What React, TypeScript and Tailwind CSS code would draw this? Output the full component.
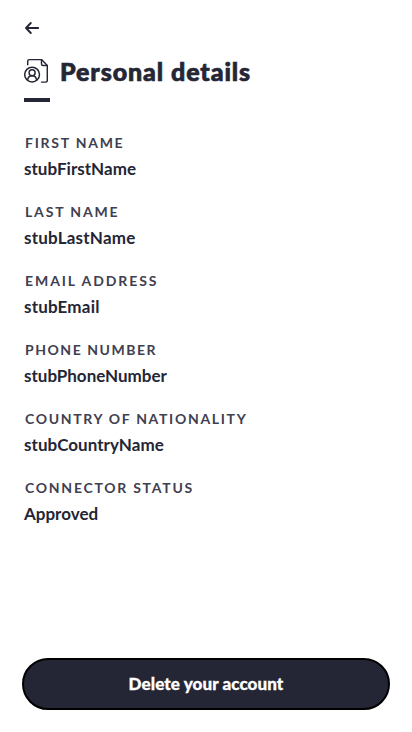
const fields = [
  { label: 'FIRST NAME', value: 'stubFirstName', labelTracking: 'tracking-[1.75px]', valueTracking: 'tracking-[0.03px]' },
  { label: 'LAST NAME', value: 'stubLastName', labelTracking: 'tracking-[1.85px]', valueTracking: 'tracking-[0.22px]' },
  { label: 'EMAIL ADDRESS', value: 'stubEmail', labelTracking: 'tracking-[1.93px]', valueTracking: 'tracking-[0.2px]' },
  { label: 'PHONE NUMBER', value: 'stubPhoneNumber', labelTracking: 'tracking-[1.53px]', valueTracking: 'tracking-[0px]' },
  { label: 'COUNTRY OF NATIONALITY', value: 'stubCountryName', labelTracking: 'tracking-[1.68px]', valueTracking: 'tracking-[0.04px]' },
  { label: 'CONNECTOR STATUS', value: 'Approved', labelTracking: 'tracking-[1.74px]', valueTracking: 'tracking-[0px]' },
];

function BackArrow() {
  return (
    <svg width="16" height="16" viewBox="0 0 16 16" fill="none" stroke="currentColor" strokeWidth="1.9" strokeLinecap="round" strokeLinejoin="round">
      <path d="M14.2 8H2M6.8 3L2 8l4.8 5" />
    </svg>
  );
}

function PersonalDetailsIcon() {
  return (
    <svg className="shrink-0" width="24" height="26" viewBox="0 0 24 26" fill="none" stroke="currentColor" strokeWidth="1.45" strokeLinecap="round" strokeLinejoin="round">
      <path d="M3.7 6.7V3.2Q3.7 1.6 5.3 1.6h12.2l5.8 5.8v15.2q0 1.5-1.5 1.5h-4.3" />
      <path d="M17.5 1.6v4.3q0 1.5 1.5 1.5h4.3" />
      <circle cx="8.1" cy="16.6" r="7.4" />
      <circle cx="8.1" cy="14.7" r="3" />
      <path d="M3.6 22.2c.2-2.7 2-4.5 4.5-4.5s4.3 1.8 4.5 4.5" />
    </svg>
  );
}

export default function App() {
  return (
    <main className="flex h-[732px] flex-col bg-white px-6 font-['Lato',sans-serif] text-[#242635]">
      <button aria-label="Back" className="mt-5 h-4 w-4">
        <BackArrow />
      </button>
      <header className="mt-[22px] flex h-[26px] items-center gap-3">
        <PersonalDetailsIcon />
        <h1 className="pt-px text-[25px] font-black tracking-[0.92px] whitespace-nowrap [-webkit-text-stroke:0.7px_currentColor]">Personal details</h1>
      </header>
      <div className="mt-[14px] h-1 w-[26px] bg-[#242635]" />
      <dl className="mt-[31px] flex flex-col gap-[17px]">
        {fields.map((f) => (
          <div key={f.label} className="h-[52px]">
            <dt className={`pl-px text-[14px] leading-5 font-bold text-[#3f4050] ${f.labelTracking}`}>{f.label}</dt>
            <dd className={`mt-1 text-[17px] leading-6 font-bold ${f.valueTracking}`}>{f.value}</dd>
          </div>
        ))}
      </dl>
      <button className="-mx-0.5 mt-auto mb-[22px] h-[52px] rounded-full border-2 border-black bg-[#242635] text-[17px] font-black tracking-[0.1px] text-white [-webkit-text-stroke:0.3px_currentColor]">Delete your account</button>
    </main>
  );
}
